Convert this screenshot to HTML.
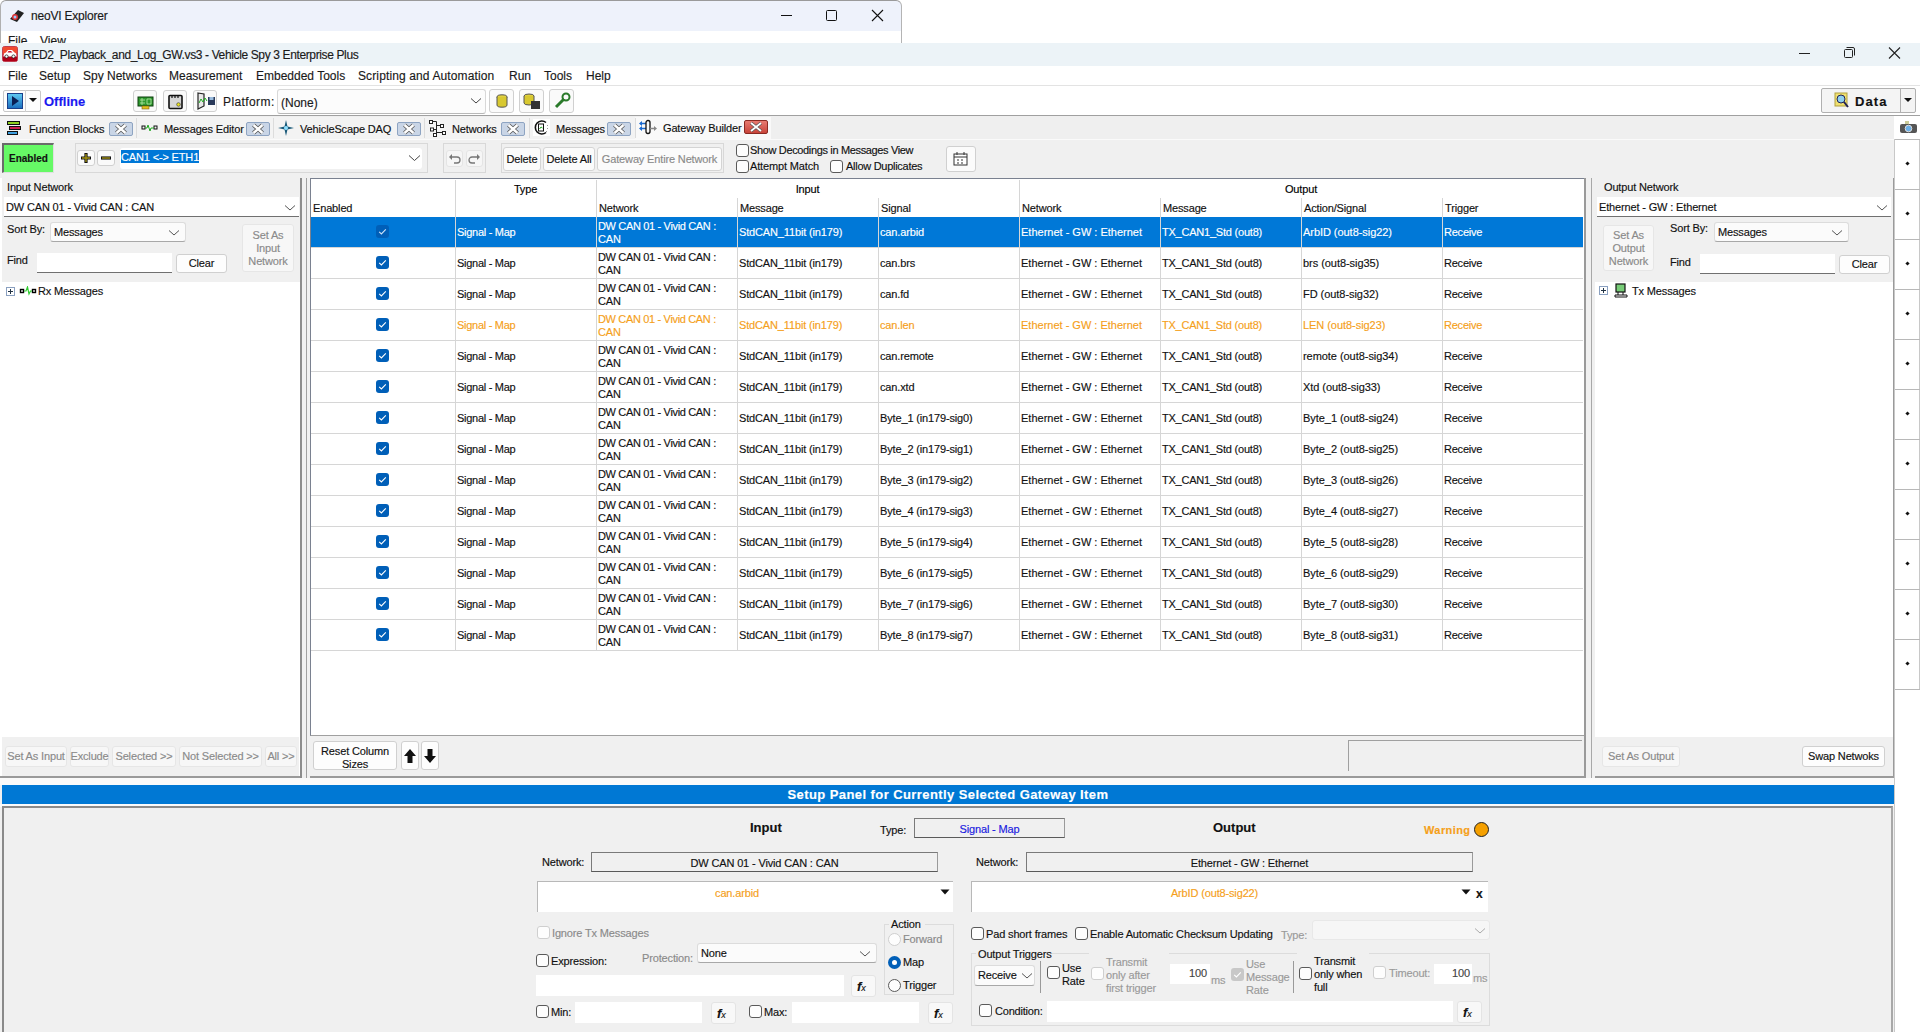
<!DOCTYPE html><html><head><meta charset="utf-8"><style>
*{margin:0;padding:0;box-sizing:border-box}
html,body{width:1920px;height:1032px;overflow:hidden;background:#fff;position:relative;font-family:"Liberation Sans",sans-serif}
body>div,body>svg{position:absolute}
.t{position:absolute;white-space:nowrap;line-height:normal;-webkit-text-stroke:0.15px currentColor}
</style></head><body><div style="left:0px;top:0px;width:902px;height:43px;background:#fff"></div>
<div style="left:0px;top:0px;width:902px;height:31px;background:#eef2fb;border-top:1px solid #9a9a9a;border-left:1px solid #b0b0b0;border-right:1px solid #b4b4b4;border-top-left-radius:6px;border-top-right-radius:6px"></div>
<div style="left:0px;top:31px;width:902px;height:12px;background:#fff;border-left:1px solid #b0b0b0;border-right:1px solid #b4b4b4"></div>
<div class="t" style="left:31px;top:9px;font-size:12px;color:#1a1a1a;font-weight:normal;letter-spacing:-0.2px">neoVI Explorer</div>
<div class="t" style="left:8px;top:34px;font-size:12px;color:#1a1a1a;font-weight:normal;">File</div>
<div class="t" style="left:40px;top:34px;font-size:12px;color:#1a1a1a;font-weight:normal;">View</div>
<div style="left:0px;top:43px;width:1920px;height:23px;background:#ecf3f7"></div>
<div class="t" style="left:23px;top:48px;font-size:12px;color:#1a1a1a;font-weight:normal;letter-spacing:-0.37px">RED2_Playback_and_Log_GW.vs3 - Vehicle Spy 3 Enterprise Plus</div>
<div style="left:0px;top:66px;width:1920px;height:19px;background:#fff"></div>
<div class="t" style="left:8px;top:69px;font-size:12px;color:#1a1a1a;font-weight:normal;">File</div>
<div class="t" style="left:39px;top:69px;font-size:12px;color:#1a1a1a;font-weight:normal;">Setup</div>
<div class="t" style="left:83px;top:69px;font-size:12px;color:#1a1a1a;font-weight:normal;">Spy Networks</div>
<div class="t" style="left:169px;top:69px;font-size:12px;color:#1a1a1a;font-weight:normal;">Measurement</div>
<div class="t" style="left:256px;top:69px;font-size:12px;color:#1a1a1a;font-weight:normal;">Embedded Tools</div>
<div class="t" style="left:358px;top:69px;font-size:12px;color:#1a1a1a;font-weight:normal;letter-spacing:0.12px">Scripting and Automation</div>
<div class="t" style="left:509px;top:69px;font-size:12px;color:#1a1a1a;font-weight:normal;">Run</div>
<div class="t" style="left:544px;top:69px;font-size:12px;color:#1a1a1a;font-weight:normal;">Tools</div>
<div class="t" style="left:586px;top:69px;font-size:12px;color:#1a1a1a;font-weight:normal;">Help</div>
<div style="left:0px;top:85px;width:1920px;height:1px;background:#e3e3e3"></div>
<div style="left:0px;top:86px;width:1920px;height:29px;background:#fff"></div>
<div style="left:0px;top:115px;width:1920px;height:1px;background:#a0a0a0"></div>
<div style="left:0px;top:116px;width:1895px;height:23px;background:#efefef"></div>
<div style="left:0px;top:117px;width:635px;height:22px;background:#f3f3f3"></div>
<div style="left:635px;top:117px;width:136px;height:22px;background:#f9f9f9"></div>
<div style="left:0px;top:139px;width:1895px;height:1px;background:#fafafa"></div>
<div style="left:0px;top:140px;width:1895px;height:37px;background:#f0f0f0"></div>
<svg style="left:1795px;top:47px" width="20" height="14"><line x1="4" y1="6.5" x2="15" y2="6.5" stroke="#222" stroke-width="1"/></svg>
<svg style="left:1840px;top:45px" width="20" height="16"><rect x="4.5" y="4.5" width="8" height="8" rx="1" fill="none" stroke="#222"/><path d="M6.5 2.5 H13 a1.5 1.5 0 0 1 1.5 1.5 V10.5" fill="none" stroke="#222"/></svg>
<svg style="left:1885px;top:45px" width="20" height="16"><path d="M4 2.5 L15 13.5 M15 2.5 L4 13.5" stroke="#222" stroke-width="1.1"/></svg>
<svg style="left:776px;top:7px" width="20" height="16"><line x1="5" y1="8.5" x2="16" y2="8.5" stroke="#111" stroke-width="1"/></svg>
<svg style="left:822px;top:6px" width="20" height="18"><rect x="4.5" y="4.5" width="10" height="10" rx="1" fill="none" stroke="#111"/></svg>
<svg style="left:868px;top:6px" width="20" height="18"><path d="M4 4 L15 15 M15 4 L4 15" stroke="#111" stroke-width="1.1"/></svg>
<svg style="left:8px;top:7px" width="18" height="17"><path d="M2 12 L10 3 L16 6 L9 15 Z" fill="#222"/><circle cx="7" cy="10" r="3" fill="#d33"/><circle cx="7" cy="10" r="1.5" fill="#9cf"/></svg>
<svg style="left:2px;top:46px" width="16" height="16"><rect x="0.5" y="0.5" width="15" height="15" rx="2" fill="#c8102e" stroke="#c04050"/><rect x="1" y="1" width="14" height="7" fill="#f04a30"/><rect x="1" y="11" width="14" height="4" fill="#b00018"/><path d="M1.5 9 Q2 6.5 4 6.5 L6 4 H10 L12.5 6.5 Q14.5 7 14.5 9 V10.5 H1.5 Z" fill="#fff"/><path d="M6.5 5 H9 L10.5 6.5 H5.5 Z" fill="#c8102e"/><circle cx="4.5" cy="10.5" r="1.6" fill="#fff" stroke="#222" stroke-width="0.8"/><circle cx="11.5" cy="10.5" r="1.6" fill="#fff" stroke="#222" stroke-width="0.8"/></svg>
<div style="left:3px;top:90px;width:38px;height:22px;border:1px solid #c8c8c8;border-radius:2px;background:#fdfdfd"></div>
<div style="left:25px;top:90px;width:1px;height:22px;background:#d0d0d0"></div>
<div style="left:7px;top:93px;width:16px;height:16px;background:linear-gradient(#5ec8f0,#1c6fc0);border:1px solid #1a3f8a"></div>
<svg style="left:7px;top:93px" width="16" height="16"><path d="M5 3 L12 8 L5 13 Z" fill="#0a1f55"/></svg>
<svg style="left:28px;top:97px" width="10" height="6"><path d="M1 1 H9 L5 5 Z" fill="#111"/></svg>
<div class="t" style="left:44px;top:94px;font-size:13px;color:#1a1af0;font-weight:bold;letter-spacing:0px">Offline</div>
<div style="left:133px;top:90px;width:24px;height:22px;border:1px solid #d0d0d0;border-radius:3px;background:#fafafa"></div>
<div style="left:163px;top:90px;width:24px;height:22px;border:1px solid #d0d0d0;border-radius:3px;background:#fafafa"></div>
<div style="left:193px;top:90px;width:24px;height:22px;border:1px solid #d0d0d0;border-radius:3px;background:#fafafa"></div>
<svg style="left:137px;top:96px" width="18" height="14"><rect x="1" y="1" width="15" height="9" fill="#2f9a2f" stroke="#0d3d0d"/><path d="M3 4 H8 M3 7 H8 M5 2 V9 M10 3 H14 V8 H10 Z" stroke="#b8e8a8" stroke-width="0.8" fill="none"/><rect x="5" y="10" width="7" height="3" fill="#e0c020" stroke="#806010" stroke-width="0.6"/></svg>
<svg style="left:168px;top:94px" width="16" height="16"><rect x="1" y="1.5" width="13" height="13" rx="1" fill="#d6d6d6" stroke="#111" stroke-width="1.6"/><path d="M4 1 V4 M7 1 V4 M10 1 V4" stroke="#111" stroke-width="1.2"/><circle cx="10.5" cy="10.5" r="1.8" fill="#e8e020" stroke="#333" stroke-width="0.6"/></svg>
<svg style="left:196px;top:92px" width="20" height="18"><path d="M2 1 L8 2 L8 14 L2 17 Z" fill="#e8e8e8" stroke="#222" stroke-width="1.2"/><path d="M3 11 L5 7 L7 10 L9 6 L11 9" stroke="#2a2" fill="none"/><rect x="12" y="5" width="7" height="8" fill="#2a3a5a"/><rect x="13.5" y="5" width="4" height="3" fill="#9bd"/></svg>
<div class="t" style="left:223px;top:95px;font-size:12px;color:#1a1a1a;font-weight:normal;letter-spacing:0.4px">Platform:</div>
<div style="left:277px;top:89px;width:209px;height:25px;border:1px solid #d8d8d8;border-bottom:1px solid #b8b8b8;border-radius:3px;background:#fcfcfc"></div>
<div class="t" style="left:281px;top:96px;font-size:12px;color:#1a1a1a;font-weight:normal;">(None)</div>
<svg style="left:470px;top:97px" width="12" height="8"><path d="M1 1.5 L6 6 L11 1.5" stroke="#444" fill="none"/></svg>
<div style="left:489px;top:89px;width:25px;height:24px;border:1px solid #d0d0d0;border-radius:3px;background:#fafafa"></div>
<div style="left:519px;top:89px;width:25px;height:24px;border:1px solid #d0d0d0;border-radius:3px;background:#fafafa"></div>
<div style="left:549px;top:89px;width:25px;height:24px;border:1px solid #d0d0d0;border-radius:3px;background:#fafafa"></div>
<svg style="left:493px;top:93px" width="18" height="16"><ellipse cx="9" cy="4" rx="5" ry="2.2" fill="#e0d040" stroke="#555"/><path d="M4 4 V12 A5 2.2 0 0 0 14 12 V4" fill="#d8c830" stroke="#555"/></svg>
<svg style="left:522px;top:92px" width="20" height="18"><ellipse cx="7" cy="4" rx="5" ry="2" fill="#e0d040" stroke="#555"/><path d="M2 4 V11 A5 2 0 0 0 12 11 V4" fill="#d8c830" stroke="#555"/><rect x="9" y="9" width="9" height="8" fill="#333"/></svg>
<svg style="left:553px;top:92px" width="18" height="18"><path d="M3 15 L11 7" stroke="#2a7a2a" stroke-width="3"/><circle cx="13" cy="5" r="3.5" fill="none" stroke="#2a7a2a" stroke-width="2"/></svg>
<div style="left:1821px;top:88px;width:95px;height:25px;border:1px solid #b0b0b0;border-radius:2px;background:#f4f4f4"></div>
<div style="left:1900px;top:89px;width:1px;height:23px;background:#b0b0b0"></div>
<svg style="left:1834px;top:92px" width="16" height="16"><rect x="1" y="1" width="12" height="13" fill="#f0e070" stroke="#b0a040"/><circle cx="7" cy="7" r="4" fill="#8fd0f0" stroke="#225"/><path d="M10 10 L14 15" stroke="#225" stroke-width="2"/></svg>
<div class="t" style="left:1855px;top:94px;font-size:13px;color:#111;font-weight:bold;letter-spacing:1.1px">Data</div>
<svg style="left:1903px;top:97px" width="10" height="6"><path d="M1 1 H9 L5 5 Z" fill="#111"/></svg>
<div class="t" style="left:29px;top:123px;font-size:11px;color:#111;font-weight:normal;letter-spacing:-0.15px;">Function Blocks</div>
<div style="left:109px;top:122px;width:24px;height:14px;background:#c9d5e6;border:1px solid #8ea4c2;border-radius:2px"></div>
<svg style="left:114px;top:123px" width="14" height="12"><path d="M2.5 2 L11.5 10 M11.5 2 L2.5 10" stroke="#5a5a5a" stroke-width="4.2"/><path d="M2.5 2 L11.5 10 M11.5 2 L2.5 10" stroke="#fff" stroke-width="2.4"/></svg>
<div style="left:136px;top:118px;width:1px;height:20px;background:#dcdcdc"></div>
<div class="t" style="left:164px;top:123px;font-size:11px;color:#111;font-weight:normal;letter-spacing:-0.15px;">Messages Editor</div>
<div style="left:246px;top:122px;width:24px;height:14px;background:#c9d5e6;border:1px solid #8ea4c2;border-radius:2px"></div>
<svg style="left:251px;top:123px" width="14" height="12"><path d="M2.5 2 L11.5 10 M11.5 2 L2.5 10" stroke="#5a5a5a" stroke-width="4.2"/><path d="M2.5 2 L11.5 10 M11.5 2 L2.5 10" stroke="#fff" stroke-width="2.4"/></svg>
<div style="left:273px;top:118px;width:1px;height:20px;background:#dcdcdc"></div>
<div class="t" style="left:300px;top:123px;font-size:11px;color:#111;font-weight:normal;letter-spacing:-0.15px;">VehicleScape DAQ</div>
<div style="left:397px;top:122px;width:24px;height:14px;background:#c9d5e6;border:1px solid #8ea4c2;border-radius:2px"></div>
<svg style="left:402px;top:123px" width="14" height="12"><path d="M2.5 2 L11.5 10 M11.5 2 L2.5 10" stroke="#5a5a5a" stroke-width="4.2"/><path d="M2.5 2 L11.5 10 M11.5 2 L2.5 10" stroke="#fff" stroke-width="2.4"/></svg>
<div style="left:424px;top:118px;width:1px;height:20px;background:#dcdcdc"></div>
<div class="t" style="left:452px;top:123px;font-size:11px;color:#111;font-weight:normal;letter-spacing:-0.15px;">Networks</div>
<div style="left:501px;top:122px;width:24px;height:14px;background:#c9d5e6;border:1px solid #8ea4c2;border-radius:2px"></div>
<svg style="left:506px;top:123px" width="14" height="12"><path d="M2.5 2 L11.5 10 M11.5 2 L2.5 10" stroke="#5a5a5a" stroke-width="4.2"/><path d="M2.5 2 L11.5 10 M11.5 2 L2.5 10" stroke="#fff" stroke-width="2.4"/></svg>
<div style="left:529px;top:118px;width:1px;height:20px;background:#dcdcdc"></div>
<div class="t" style="left:556px;top:123px;font-size:11px;color:#111;font-weight:normal;letter-spacing:-0.15px;">Messages</div>
<div style="left:607px;top:122px;width:24px;height:14px;background:#c9d5e6;border:1px solid #8ea4c2;border-radius:2px"></div>
<svg style="left:612px;top:123px" width="14" height="12"><path d="M2.5 2 L11.5 10 M11.5 2 L2.5 10" stroke="#5a5a5a" stroke-width="4.2"/><path d="M2.5 2 L11.5 10 M11.5 2 L2.5 10" stroke="#fff" stroke-width="2.4"/></svg>
<div style="left:635px;top:118px;width:1px;height:20px;background:#dcdcdc"></div>
<div class="t" style="left:663px;top:122px;font-size:11px;color:#111;font-weight:normal;letter-spacing:-0.15px;">Gateway Builder</div>
<div style="left:744px;top:120px;width:24px;height:14px;background:linear-gradient(#e87a70,#c8443a);border:1px solid #8a2a22;border-radius:2px"></div>
<svg style="left:749px;top:121px" width="14" height="12"><path d="M2 2 L12 10 M12 2 L2 10" stroke="#555" stroke-width="3.2"/><path d="M2 2 L12 10 M12 2 L2 10" stroke="#fff" stroke-width="1.8"/></svg>
<div style="left:7px;top:121px;width:13px;height:4px;background:#8fd020;border:1px solid #111"></div><div style="left:9px;top:126px;width:12px;height:4px;background:#d02050;border:1px solid #111"></div><div style="left:7px;top:131px;width:11px;height:4px;background:#40a0e0;border:1px solid #111"></div>
<svg style="left:141px;top:122px" width="17" height="12"><rect x="1" y="4" width="3" height="3" fill="none" stroke="#111"/><rect x="13" y="4" width="3" height="3" fill="none" stroke="#111"/><path d="M4 6 L6 6 L7 3 L9 9 L10 6 L13 6" stroke="#2a2" fill="none"/></svg>
<svg style="left:278px;top:120px" width="16" height="16"><path d="M8 0 L9.5 6.5 L16 8 L9.5 9.5 L8 16 L6.5 9.5 L0 8 L6.5 6.5 Z" fill="#1a5a7a"/><circle cx="8" cy="8" r="2" fill="#8fe0ff"/></svg>
<svg style="left:428px;top:119px" width="19" height="19"><path d="M4.5 2.5 H8.5 V14 M8.5 6.5 H12 M5.5 10.5 H8.5 M8.5 13.5 H14" stroke="#222" fill="none"/><rect x="1.5" y="1.5" width="3" height="3" fill="#fff" stroke="#222"/><rect x="12.5" y="5.5" width="3" height="3" fill="#fff" stroke="#222"/><rect x="2.5" y="9" width="3" height="3" fill="#fff" stroke="#222"/><rect x="14.5" y="12.5" width="3" height="3" fill="#fff" stroke="#222"/><rect x="5.5" y="14.5" width="3" height="3" fill="#fff" stroke="#222"/></svg>
<svg style="left:533px;top:119px" width="17" height="17"><rect x="0" y="0" width="17" height="17" fill="#fff"/><path d="M13 3.5 A6.5 6.5 0 1 0 13 13.5" fill="none" stroke="#111" stroke-width="1.6"/><rect x="5.5" y="5" width="5" height="7" fill="#fff" stroke="#111"/><path d="M6.5 10 L8 8 L9.5 9" stroke="#2a2" fill="none"/><path d="M14.5 6 V7 M14.5 9 V10 M13.5 12 V13" stroke="#999"/></svg>
<svg style="left:639px;top:119px" width="19" height="16"><path d="M1 4.5 H7 M1 9.5 H7" stroke="#1a6ad0" stroke-width="1.6"/><path d="M0 4.5 L3 2 V7 Z M0 9.5 L3 7 V12 Z" fill="#1a6ad0"/><rect x="7" y="1.5" width="4" height="13" rx="2" fill="none" stroke="#111" stroke-width="1.3"/><path d="M11 9.5 H16" stroke="#888" stroke-width="1.5"/><path d="M18 9.5 L15 7 V12 Z" fill="#888"/></svg>
<div style="left:1896px;top:120px;width:22px;height:18px"></div>
<div style="left:2px;top:143px;width:52px;height:30px;background:#66f966;border-top:2px solid #6a6a6a;border-left:2px solid #6a6a6a;border-right:1px solid #e0e0e0;border-bottom:1px solid #e0e0e0"></div>
<div class="t" style="left:9px;top:153px;font-size:10px;color:#111;font-weight:bold;">Enabled</div>
<div style="left:75px;top:143px;width:353px;height:30px;border:1px solid #d8d8d8;background:#f0f0f0"></div>
<div style="left:120px;top:148px;width:302px;height:21px;background:#fff;border-radius:3px"></div>
<div style="left:77px;top:150px;width:18px;height:16px;border:1px solid #d0d0d0;border-radius:3px;background:#fafafa"></div>
<div style="left:97px;top:150px;width:18px;height:16px;border:1px solid #d0d0d0;border-radius:3px;background:#fafafa"></div>
<svg style="left:80px;top:152px" width="12" height="12"><path d="M6 1 V11 M1 6 H11" stroke="#111" stroke-width="3.2"/><path d="M6 2 V10 M2 6 H10" stroke="#a09010" stroke-width="1.4"/></svg>
<svg style="left:100px;top:152px" width="12" height="12"><path d="M1 6 H11" stroke="#111" stroke-width="3.2"/><path d="M2 6 H10" stroke="#a09010" stroke-width="1.4"/></svg>
<div style="left:121px;top:150px;width:78px;height:13px;background:#0078d7"></div>
<div class="t" style="left:121px;top:151px;font-size:11px;color:#fff;font-weight:normal;letter-spacing:-0.15px;">CAN1 &lt;-&gt; ETH1</div>
<svg style="left:408px;top:154px" width="13" height="8"><path d="M1 1.5 L6.5 6.5 L12 1.5" stroke="#444" fill="none"/></svg>
<div style="left:443px;top:143px;width:43px;height:30px;border:1px solid #d8d8d8"></div>
<div style="left:446px;top:150px;width:17px;height:17px;border:1px solid #e4e4e4;border-radius:3px;background:#f6f6f6"></div>
<div style="left:466px;top:150px;width:17px;height:17px;border:1px solid #e4e4e4;border-radius:3px;background:#f6f6f6"></div>
<svg style="left:448px;top:153px" width="14" height="11"><path d="M3 4 H9 A3 3 0 0 1 9 10 H6" stroke="#777" fill="none" stroke-width="1.3"/><path d="M1 4 L4 1 V7 Z" fill="#777"/></svg>
<svg style="left:467px;top:153px" width="14" height="11"><path d="M11 4 H5 A3 3 0 0 0 5 10 H8" stroke="#777" fill="none" stroke-width="1.3"/><path d="M13 4 L10 1 V7 Z" fill="#777"/></svg>
<div style="left:501px;top:143px;width:223px;height:30px;border:1px solid #d8d8d8"></div>
<div style="left:503px;top:147px;width:38px;height:24px;border:1px solid #d4d4d4;border-radius:3px;background:#fbfbfb"></div>
<div class="t" style="left:503px;top:153px;width:38px;text-align:center;font-size:11px;color:#111;font-weight:normal;letter-spacing:-0.15px;">Delete</div>
<div style="left:543px;top:147px;width:52px;height:24px;border:1px solid #d4d4d4;border-radius:3px;background:#fbfbfb"></div>
<div class="t" style="left:543px;top:153px;width:52px;text-align:center;font-size:11px;color:#111;font-weight:normal;letter-spacing:-0.15px;">Delete All</div>
<div style="left:597px;top:147px;width:125px;height:24px;border:1px solid #d4d4d4;border-radius:3px;background:#fbfbfb"></div>
<div class="t" style="left:597px;top:153px;width:125px;text-align:center;font-size:11px;color:#8a8a8a;font-weight:normal;letter-spacing:-0.15px;">Gateway Entire Network</div>
<div style="left:736px;top:144px;width:13px;height:13px;border:1px solid #5a5a5a;border-radius:3px;background:#fdfdfd"></div>
<div class="t" style="left:750px;top:144px;font-size:11px;color:#111;font-weight:normal;letter-spacing:-0.15px;letter-spacing:-0.35px">Show Decodings in Messages View</div>
<div style="left:736px;top:160px;width:13px;height:13px;border:1px solid #5a5a5a;border-radius:3px;background:#fdfdfd"></div>
<div class="t" style="left:750px;top:160px;font-size:11px;color:#111;font-weight:normal;letter-spacing:-0.15px;">Attempt Match</div>
<div style="left:830px;top:160px;width:13px;height:13px;border:1px solid #5a5a5a;border-radius:3px;background:#fdfdfd"></div>
<div class="t" style="left:846px;top:160px;font-size:11px;color:#111;font-weight:normal;letter-spacing:-0.15px;letter-spacing:-0.28px">Allow Duplicates</div>
<div style="left:946px;top:146px;width:30px;height:26px;border:1px solid #d0d0d0;border-radius:3px;background:#fbfbfb"></div>
<svg style="left:953px;top:152px" width="15" height="14"><rect x="1" y="2" width="13" height="11" fill="#fff" stroke="#333"/><path d="M1 5 H14 M4 8 H6 M8 8 H10 M4 11 H6 M8 11 H10" stroke="#333"/><path d="M4 0 V3 M11 0 V3" stroke="#333"/></svg>
<div style="left:0px;top:177px;width:1895px;height:610px;background:#f0f0f0"></div>
<div style="left:0px;top:178px;width:300px;height:599px;background:#fff"></div>
<div style="left:2px;top:178px;width:298px;height:104px;background:#f0f0f0"></div>
<div class="t" style="left:7px;top:181px;font-size:11px;color:#111;font-weight:normal;letter-spacing:-0.15px;">Input Network</div>
<div style="left:4px;top:197px;width:295px;height:20px;background:#fff;border-bottom:1px solid #707070"></div>
<div class="t" style="left:6px;top:201px;font-size:11px;color:#111;font-weight:normal;letter-spacing:-0.15px;">DW CAN 01 - Vivid CAN : CAN</div>
<svg style="left:284px;top:204px" width="12" height="8"><path d="M1 1.5 L6 6 L11 1.5" stroke="#555" fill="none"/></svg>
<div class="t" style="left:7px;top:223px;font-size:11px;color:#111;font-weight:normal;letter-spacing:-0.15px;">Sort By:</div>
<div style="left:50px;top:222px;width:136px;height:20px;background:#fbfbfb;border:1px solid #dcdcdc;border-bottom-color:#a8a8a8;border-radius:3px"></div>
<div class="t" style="left:54px;top:226px;font-size:11px;color:#111;font-weight:normal;letter-spacing:-0.15px;">Messages</div>
<svg style="left:168px;top:229px" width="12" height="8"><path d="M1 1.5 L6 6 L11 1.5" stroke="#555" fill="none"/></svg>
<div style="left:242px;top:224px;width:52px;height:48px;border:1px solid #e6e6e6;border-radius:3px;background:#f7f7f7"></div>
<div class="t" style="left:242px;top:229px;width:52px;text-align:center;font-size:11px;color:#8a8a8a;font-weight:normal;letter-spacing:-0.15px;">Set As</div>
<div class="t" style="left:242px;top:242px;width:52px;text-align:center;font-size:11px;color:#8a8a8a;font-weight:normal;letter-spacing:-0.15px;">Input</div>
<div class="t" style="left:242px;top:255px;width:52px;text-align:center;font-size:11px;color:#8a8a8a;font-weight:normal;letter-spacing:-0.15px;">Network</div>
<div class="t" style="left:7px;top:254px;font-size:11px;color:#111;font-weight:normal;letter-spacing:-0.15px;">Find</div>
<div style="left:37px;top:253px;width:135px;height:20px;background:#fff;border-bottom:1px solid #707070"></div>
<div style="left:176px;top:254px;width:51px;height:19px;border:1px solid #d0d0d0;border-radius:3px;background:#fdfdfd"></div>
<div class="t" style="left:176px;top:257px;width:51px;text-align:center;font-size:11px;color:#111;font-weight:normal;letter-spacing:-0.15px;">Clear</div>
<div style="left:6px;top:287px;width:9px;height:9px;border:1px solid #8aa0c0;background:#fff"></div>
<svg style="left:6px;top:287px" width="9" height="9"><path d="M2 4.5 H7 M4.5 2 V7" stroke="#234"/></svg>
<svg style="left:19px;top:286px" width="18" height="10"><rect x="1.5" y="3.5" width="3" height="3" fill="#fff" stroke="#000" stroke-width="1.4"/><rect x="13.5" y="3.5" width="3" height="3" fill="#fff" stroke="#000" stroke-width="1.4"/><path d="M5 5 L7 5 L8.5 1 L10 8 L11.5 5 L13 5" stroke="#3c3" stroke-width="1.2" fill="none"/></svg>
<div class="t" style="left:38px;top:285px;font-size:11px;color:#111;font-weight:normal;letter-spacing:-0.15px;">Rx Messages</div>
<div style="left:2px;top:737px;width:297px;height:40px;background:#f0f0f0"></div>
<div style="left:5px;top:746px;width:62px;height:21px;border:1px solid #e6e6e6;border-radius:3px;background:#f7f7f7"></div>
<div class="t" style="left:5px;top:750px;width:62px;text-align:center;font-size:11px;color:#8a8a8a;font-weight:normal;letter-spacing:-0.15px;">Set As Input</div>
<div style="left:70px;top:746px;width:39px;height:21px;border:1px solid #e6e6e6;border-radius:3px;background:#f7f7f7"></div>
<div class="t" style="left:70px;top:750px;width:39px;text-align:center;font-size:11px;color:#8a8a8a;font-weight:normal;letter-spacing:-0.15px;">Exclude</div>
<div style="left:112px;top:746px;width:64px;height:21px;border:1px solid #e6e6e6;border-radius:3px;background:#f7f7f7"></div>
<div class="t" style="left:112px;top:750px;width:64px;text-align:center;font-size:11px;color:#8a8a8a;font-weight:normal;letter-spacing:-0.15px;">Selected &gt;&gt;</div>
<div style="left:179px;top:746px;width:83px;height:21px;border:1px solid #e6e6e6;border-radius:3px;background:#f7f7f7"></div>
<div class="t" style="left:179px;top:750px;width:83px;text-align:center;font-size:11px;color:#8a8a8a;font-weight:normal;letter-spacing:-0.15px;">Not Selected &gt;&gt;</div>
<div style="left:265px;top:746px;width:32px;height:21px;border:1px solid #e6e6e6;border-radius:3px;background:#f7f7f7"></div>
<div class="t" style="left:265px;top:750px;width:32px;text-align:center;font-size:11px;color:#8a8a8a;font-weight:normal;letter-spacing:-0.15px;">All &gt;&gt;</div>
<div style="left:0px;top:776px;width:300px;height:2px;background:#9a9a9a"></div>
<div style="left:300px;top:178px;width:2px;height:600px;background:#8c8c8c"></div>
<div style="left:306px;top:178px;width:1px;height:600px;background:#a0a0a0"></div>
<div style="left:310px;top:178px;width:1275px;height:558px;background:#fff;border-top:1px solid #7a8190;border-left:1px solid #7a8190;border-bottom:1px solid #a0a0a0"></div>
<div style="left:455px;top:180px;width:1px;height:37px;background:#d6d6d6"></div>
<div style="left:596px;top:180px;width:1px;height:37px;background:#d6d6d6"></div>
<div style="left:1019px;top:180px;width:1px;height:37px;background:#d6d6d6"></div>
<div style="left:737px;top:198px;width:1px;height:19px;background:#d6d6d6"></div>
<div style="left:878px;top:198px;width:1px;height:19px;background:#d6d6d6"></div>
<div style="left:1160px;top:198px;width:1px;height:19px;background:#d6d6d6"></div>
<div style="left:1301px;top:198px;width:1px;height:19px;background:#d6d6d6"></div>
<div style="left:1442px;top:198px;width:1px;height:19px;background:#d6d6d6"></div>
<div class="t" style="left:455px;top:183px;width:141px;text-align:center;font-size:11px;color:#000;font-weight:normal;letter-spacing:-0.15px;">Type</div>
<div class="t" style="left:596px;top:183px;width:423px;text-align:center;font-size:11px;color:#000;font-weight:normal;letter-spacing:-0.15px;">Input</div>
<div class="t" style="left:1019px;top:183px;width:564px;text-align:center;font-size:11px;color:#000;font-weight:normal;letter-spacing:-0.15px;">Output</div>
<div class="t" style="left:313px;top:202px;font-size:11px;color:#111;font-weight:normal;letter-spacing:-0.15px;">Enabled</div>
<div class="t" style="left:599px;top:202px;font-size:11px;color:#111;font-weight:normal;letter-spacing:-0.15px;">Network</div>
<div class="t" style="left:740px;top:202px;font-size:11px;color:#111;font-weight:normal;letter-spacing:-0.15px;">Message</div>
<div class="t" style="left:881px;top:202px;font-size:11px;color:#111;font-weight:normal;letter-spacing:-0.15px;">Signal</div>
<div class="t" style="left:1022px;top:202px;font-size:11px;color:#111;font-weight:normal;letter-spacing:-0.15px;">Network</div>
<div class="t" style="left:1163px;top:202px;font-size:11px;color:#111;font-weight:normal;letter-spacing:-0.15px;">Message</div>
<div class="t" style="left:1304px;top:202px;font-size:11px;color:#111;font-weight:normal;letter-spacing:-0.15px;">Action/Signal</div>
<div class="t" style="left:1445px;top:202px;font-size:11px;color:#111;font-weight:normal;letter-spacing:-0.15px;">Trigger</div>
<div style="left:311px;top:217px;width:1272px;height:30px;background:#0078d7"></div>
<div style="left:455px;top:217px;width:1px;height:31px;background:#d6d6d6"></div>
<div style="left:596px;top:217px;width:1px;height:31px;background:#d6d6d6"></div>
<div style="left:737px;top:217px;width:1px;height:31px;background:#d6d6d6"></div>
<div style="left:878px;top:217px;width:1px;height:31px;background:#d6d6d6"></div>
<div style="left:1019px;top:217px;width:1px;height:31px;background:#d6d6d6"></div>
<div style="left:1160px;top:217px;width:1px;height:31px;background:#d6d6d6"></div>
<div style="left:1301px;top:217px;width:1px;height:31px;background:#d6d6d6"></div>
<div style="left:1442px;top:217px;width:1px;height:31px;background:#d6d6d6"></div>
<div style="left:311px;top:247px;width:1272px;height:1px;background:#d6d6d6"></div>
<div style="left:376px;top:225px;width:13px;height:13px;background:#005fb8;border-radius:3px"></div>
<svg style="left:376px;top:225px" width="13" height="13"><path d="M3.2 6.8 L5.4 9 L9.8 4.3" stroke="#cfe3f7" fill="none" stroke-width="1.1"/></svg>
<div class="t" style="left:457px;top:226px;font-size:11px;color:#fff;font-weight:normal;letter-spacing:-0.15px;letter-spacing:-0.28px">Signal - Map</div>
<div class="t" style="left:598px;top:220px;font-size:11px;color:#fff;font-weight:normal;letter-spacing:-0.15px;letter-spacing:-0.34px">DW CAN 01 - Vivid CAN :</div>
<div class="t" style="left:598px;top:233px;font-size:11px;color:#fff;font-weight:normal;letter-spacing:-0.15px;">CAN</div>
<div class="t" style="left:739px;top:226px;font-size:11px;color:#fff;font-weight:normal;letter-spacing:-0.15px;">StdCAN_11bit (in179)</div>
<div class="t" style="left:880px;top:226px;font-size:11px;color:#fff;font-weight:normal;letter-spacing:-0.15px;">can.arbid</div>
<div class="t" style="left:1021px;top:226px;font-size:11px;color:#fff;font-weight:normal;letter-spacing:-0.15px;letter-spacing:0px">Ethernet - GW : Ethernet</div>
<div class="t" style="left:1162px;top:226px;font-size:11px;color:#fff;font-weight:normal;letter-spacing:-0.15px;letter-spacing:-0.22px">TX_CAN1_Std (out8)</div>
<div class="t" style="left:1303px;top:226px;font-size:11px;color:#fff;font-weight:normal;letter-spacing:-0.15px;letter-spacing:-0.05px">ArbID (out8-sig22)</div>
<div class="t" style="left:1444px;top:226px;font-size:11px;color:#fff;font-weight:normal;letter-spacing:-0.15px;letter-spacing:-0.22px">Receive</div>
<div style="left:455px;top:248px;width:1px;height:31px;background:#d6d6d6"></div>
<div style="left:596px;top:248px;width:1px;height:31px;background:#d6d6d6"></div>
<div style="left:737px;top:248px;width:1px;height:31px;background:#d6d6d6"></div>
<div style="left:878px;top:248px;width:1px;height:31px;background:#d6d6d6"></div>
<div style="left:1019px;top:248px;width:1px;height:31px;background:#d6d6d6"></div>
<div style="left:1160px;top:248px;width:1px;height:31px;background:#d6d6d6"></div>
<div style="left:1301px;top:248px;width:1px;height:31px;background:#d6d6d6"></div>
<div style="left:1442px;top:248px;width:1px;height:31px;background:#d6d6d6"></div>
<div style="left:311px;top:278px;width:1272px;height:1px;background:#d6d6d6"></div>
<div style="left:376px;top:256px;width:13px;height:13px;background:#005fb8;border-radius:3px"></div>
<svg style="left:376px;top:256px" width="13" height="13"><path d="M3.2 6.8 L5.4 9 L9.8 4.3" stroke="#fff" fill="none" stroke-width="1.1"/></svg>
<div class="t" style="left:457px;top:257px;font-size:11px;color:#111;font-weight:normal;letter-spacing:-0.15px;letter-spacing:-0.28px">Signal - Map</div>
<div class="t" style="left:598px;top:251px;font-size:11px;color:#111;font-weight:normal;letter-spacing:-0.15px;letter-spacing:-0.34px">DW CAN 01 - Vivid CAN :</div>
<div class="t" style="left:598px;top:264px;font-size:11px;color:#111;font-weight:normal;letter-spacing:-0.15px;">CAN</div>
<div class="t" style="left:739px;top:257px;font-size:11px;color:#111;font-weight:normal;letter-spacing:-0.15px;">StdCAN_11bit (in179)</div>
<div class="t" style="left:880px;top:257px;font-size:11px;color:#111;font-weight:normal;letter-spacing:-0.15px;">can.brs</div>
<div class="t" style="left:1021px;top:257px;font-size:11px;color:#111;font-weight:normal;letter-spacing:-0.15px;letter-spacing:0px">Ethernet - GW : Ethernet</div>
<div class="t" style="left:1162px;top:257px;font-size:11px;color:#111;font-weight:normal;letter-spacing:-0.15px;letter-spacing:-0.22px">TX_CAN1_Std (out8)</div>
<div class="t" style="left:1303px;top:257px;font-size:11px;color:#111;font-weight:normal;letter-spacing:-0.15px;letter-spacing:-0.05px">brs (out8-sig35)</div>
<div class="t" style="left:1444px;top:257px;font-size:11px;color:#111;font-weight:normal;letter-spacing:-0.15px;letter-spacing:-0.22px">Receive</div>
<div style="left:455px;top:279px;width:1px;height:31px;background:#d6d6d6"></div>
<div style="left:596px;top:279px;width:1px;height:31px;background:#d6d6d6"></div>
<div style="left:737px;top:279px;width:1px;height:31px;background:#d6d6d6"></div>
<div style="left:878px;top:279px;width:1px;height:31px;background:#d6d6d6"></div>
<div style="left:1019px;top:279px;width:1px;height:31px;background:#d6d6d6"></div>
<div style="left:1160px;top:279px;width:1px;height:31px;background:#d6d6d6"></div>
<div style="left:1301px;top:279px;width:1px;height:31px;background:#d6d6d6"></div>
<div style="left:1442px;top:279px;width:1px;height:31px;background:#d6d6d6"></div>
<div style="left:311px;top:309px;width:1272px;height:1px;background:#d6d6d6"></div>
<div style="left:376px;top:287px;width:13px;height:13px;background:#005fb8;border-radius:3px"></div>
<svg style="left:376px;top:287px" width="13" height="13"><path d="M3.2 6.8 L5.4 9 L9.8 4.3" stroke="#fff" fill="none" stroke-width="1.1"/></svg>
<div class="t" style="left:457px;top:288px;font-size:11px;color:#111;font-weight:normal;letter-spacing:-0.15px;letter-spacing:-0.28px">Signal - Map</div>
<div class="t" style="left:598px;top:282px;font-size:11px;color:#111;font-weight:normal;letter-spacing:-0.15px;letter-spacing:-0.34px">DW CAN 01 - Vivid CAN :</div>
<div class="t" style="left:598px;top:295px;font-size:11px;color:#111;font-weight:normal;letter-spacing:-0.15px;">CAN</div>
<div class="t" style="left:739px;top:288px;font-size:11px;color:#111;font-weight:normal;letter-spacing:-0.15px;">StdCAN_11bit (in179)</div>
<div class="t" style="left:880px;top:288px;font-size:11px;color:#111;font-weight:normal;letter-spacing:-0.15px;">can.fd</div>
<div class="t" style="left:1021px;top:288px;font-size:11px;color:#111;font-weight:normal;letter-spacing:-0.15px;letter-spacing:0px">Ethernet - GW : Ethernet</div>
<div class="t" style="left:1162px;top:288px;font-size:11px;color:#111;font-weight:normal;letter-spacing:-0.15px;letter-spacing:-0.22px">TX_CAN1_Std (out8)</div>
<div class="t" style="left:1303px;top:288px;font-size:11px;color:#111;font-weight:normal;letter-spacing:-0.15px;letter-spacing:-0.05px">FD (out8-sig32)</div>
<div class="t" style="left:1444px;top:288px;font-size:11px;color:#111;font-weight:normal;letter-spacing:-0.15px;letter-spacing:-0.22px">Receive</div>
<div style="left:455px;top:310px;width:1px;height:31px;background:#d6d6d6"></div>
<div style="left:596px;top:310px;width:1px;height:31px;background:#d6d6d6"></div>
<div style="left:737px;top:310px;width:1px;height:31px;background:#d6d6d6"></div>
<div style="left:878px;top:310px;width:1px;height:31px;background:#d6d6d6"></div>
<div style="left:1019px;top:310px;width:1px;height:31px;background:#d6d6d6"></div>
<div style="left:1160px;top:310px;width:1px;height:31px;background:#d6d6d6"></div>
<div style="left:1301px;top:310px;width:1px;height:31px;background:#d6d6d6"></div>
<div style="left:1442px;top:310px;width:1px;height:31px;background:#d6d6d6"></div>
<div style="left:311px;top:340px;width:1272px;height:1px;background:#d6d6d6"></div>
<div style="left:376px;top:318px;width:13px;height:13px;background:#005fb8;border-radius:3px"></div>
<svg style="left:376px;top:318px" width="13" height="13"><path d="M3.2 6.8 L5.4 9 L9.8 4.3" stroke="#fff" fill="none" stroke-width="1.1"/></svg>
<div class="t" style="left:457px;top:319px;font-size:11px;color:#f5a01a;font-weight:normal;letter-spacing:-0.15px;letter-spacing:-0.28px">Signal - Map</div>
<div class="t" style="left:598px;top:313px;font-size:11px;color:#f5a01a;font-weight:normal;letter-spacing:-0.15px;letter-spacing:-0.34px">DW CAN 01 - Vivid CAN :</div>
<div class="t" style="left:598px;top:326px;font-size:11px;color:#f5a01a;font-weight:normal;letter-spacing:-0.15px;">CAN</div>
<div class="t" style="left:739px;top:319px;font-size:11px;color:#f5a01a;font-weight:normal;letter-spacing:-0.15px;">StdCAN_11bit (in179)</div>
<div class="t" style="left:880px;top:319px;font-size:11px;color:#f5a01a;font-weight:normal;letter-spacing:-0.15px;">can.len</div>
<div class="t" style="left:1021px;top:319px;font-size:11px;color:#f5a01a;font-weight:normal;letter-spacing:-0.15px;letter-spacing:0px">Ethernet - GW : Ethernet</div>
<div class="t" style="left:1162px;top:319px;font-size:11px;color:#f5a01a;font-weight:normal;letter-spacing:-0.15px;letter-spacing:-0.22px">TX_CAN1_Std (out8)</div>
<div class="t" style="left:1303px;top:319px;font-size:11px;color:#f5a01a;font-weight:normal;letter-spacing:-0.15px;letter-spacing:-0.05px">LEN (out8-sig23)</div>
<div class="t" style="left:1444px;top:319px;font-size:11px;color:#f5a01a;font-weight:normal;letter-spacing:-0.15px;letter-spacing:-0.22px">Receive</div>
<div style="left:455px;top:341px;width:1px;height:31px;background:#d6d6d6"></div>
<div style="left:596px;top:341px;width:1px;height:31px;background:#d6d6d6"></div>
<div style="left:737px;top:341px;width:1px;height:31px;background:#d6d6d6"></div>
<div style="left:878px;top:341px;width:1px;height:31px;background:#d6d6d6"></div>
<div style="left:1019px;top:341px;width:1px;height:31px;background:#d6d6d6"></div>
<div style="left:1160px;top:341px;width:1px;height:31px;background:#d6d6d6"></div>
<div style="left:1301px;top:341px;width:1px;height:31px;background:#d6d6d6"></div>
<div style="left:1442px;top:341px;width:1px;height:31px;background:#d6d6d6"></div>
<div style="left:311px;top:371px;width:1272px;height:1px;background:#d6d6d6"></div>
<div style="left:376px;top:349px;width:13px;height:13px;background:#005fb8;border-radius:3px"></div>
<svg style="left:376px;top:349px" width="13" height="13"><path d="M3.2 6.8 L5.4 9 L9.8 4.3" stroke="#fff" fill="none" stroke-width="1.1"/></svg>
<div class="t" style="left:457px;top:350px;font-size:11px;color:#111;font-weight:normal;letter-spacing:-0.15px;letter-spacing:-0.28px">Signal - Map</div>
<div class="t" style="left:598px;top:344px;font-size:11px;color:#111;font-weight:normal;letter-spacing:-0.15px;letter-spacing:-0.34px">DW CAN 01 - Vivid CAN :</div>
<div class="t" style="left:598px;top:357px;font-size:11px;color:#111;font-weight:normal;letter-spacing:-0.15px;">CAN</div>
<div class="t" style="left:739px;top:350px;font-size:11px;color:#111;font-weight:normal;letter-spacing:-0.15px;">StdCAN_11bit (in179)</div>
<div class="t" style="left:880px;top:350px;font-size:11px;color:#111;font-weight:normal;letter-spacing:-0.15px;">can.remote</div>
<div class="t" style="left:1021px;top:350px;font-size:11px;color:#111;font-weight:normal;letter-spacing:-0.15px;letter-spacing:0px">Ethernet - GW : Ethernet</div>
<div class="t" style="left:1162px;top:350px;font-size:11px;color:#111;font-weight:normal;letter-spacing:-0.15px;letter-spacing:-0.22px">TX_CAN1_Std (out8)</div>
<div class="t" style="left:1303px;top:350px;font-size:11px;color:#111;font-weight:normal;letter-spacing:-0.15px;letter-spacing:-0.05px">remote (out8-sig34)</div>
<div class="t" style="left:1444px;top:350px;font-size:11px;color:#111;font-weight:normal;letter-spacing:-0.15px;letter-spacing:-0.22px">Receive</div>
<div style="left:455px;top:372px;width:1px;height:31px;background:#d6d6d6"></div>
<div style="left:596px;top:372px;width:1px;height:31px;background:#d6d6d6"></div>
<div style="left:737px;top:372px;width:1px;height:31px;background:#d6d6d6"></div>
<div style="left:878px;top:372px;width:1px;height:31px;background:#d6d6d6"></div>
<div style="left:1019px;top:372px;width:1px;height:31px;background:#d6d6d6"></div>
<div style="left:1160px;top:372px;width:1px;height:31px;background:#d6d6d6"></div>
<div style="left:1301px;top:372px;width:1px;height:31px;background:#d6d6d6"></div>
<div style="left:1442px;top:372px;width:1px;height:31px;background:#d6d6d6"></div>
<div style="left:311px;top:402px;width:1272px;height:1px;background:#d6d6d6"></div>
<div style="left:376px;top:380px;width:13px;height:13px;background:#005fb8;border-radius:3px"></div>
<svg style="left:376px;top:380px" width="13" height="13"><path d="M3.2 6.8 L5.4 9 L9.8 4.3" stroke="#fff" fill="none" stroke-width="1.1"/></svg>
<div class="t" style="left:457px;top:381px;font-size:11px;color:#111;font-weight:normal;letter-spacing:-0.15px;letter-spacing:-0.28px">Signal - Map</div>
<div class="t" style="left:598px;top:375px;font-size:11px;color:#111;font-weight:normal;letter-spacing:-0.15px;letter-spacing:-0.34px">DW CAN 01 - Vivid CAN :</div>
<div class="t" style="left:598px;top:388px;font-size:11px;color:#111;font-weight:normal;letter-spacing:-0.15px;">CAN</div>
<div class="t" style="left:739px;top:381px;font-size:11px;color:#111;font-weight:normal;letter-spacing:-0.15px;">StdCAN_11bit (in179)</div>
<div class="t" style="left:880px;top:381px;font-size:11px;color:#111;font-weight:normal;letter-spacing:-0.15px;">can.xtd</div>
<div class="t" style="left:1021px;top:381px;font-size:11px;color:#111;font-weight:normal;letter-spacing:-0.15px;letter-spacing:0px">Ethernet - GW : Ethernet</div>
<div class="t" style="left:1162px;top:381px;font-size:11px;color:#111;font-weight:normal;letter-spacing:-0.15px;letter-spacing:-0.22px">TX_CAN1_Std (out8)</div>
<div class="t" style="left:1303px;top:381px;font-size:11px;color:#111;font-weight:normal;letter-spacing:-0.15px;letter-spacing:-0.05px">Xtd (out8-sig33)</div>
<div class="t" style="left:1444px;top:381px;font-size:11px;color:#111;font-weight:normal;letter-spacing:-0.15px;letter-spacing:-0.22px">Receive</div>
<div style="left:455px;top:403px;width:1px;height:31px;background:#d6d6d6"></div>
<div style="left:596px;top:403px;width:1px;height:31px;background:#d6d6d6"></div>
<div style="left:737px;top:403px;width:1px;height:31px;background:#d6d6d6"></div>
<div style="left:878px;top:403px;width:1px;height:31px;background:#d6d6d6"></div>
<div style="left:1019px;top:403px;width:1px;height:31px;background:#d6d6d6"></div>
<div style="left:1160px;top:403px;width:1px;height:31px;background:#d6d6d6"></div>
<div style="left:1301px;top:403px;width:1px;height:31px;background:#d6d6d6"></div>
<div style="left:1442px;top:403px;width:1px;height:31px;background:#d6d6d6"></div>
<div style="left:311px;top:433px;width:1272px;height:1px;background:#d6d6d6"></div>
<div style="left:376px;top:411px;width:13px;height:13px;background:#005fb8;border-radius:3px"></div>
<svg style="left:376px;top:411px" width="13" height="13"><path d="M3.2 6.8 L5.4 9 L9.8 4.3" stroke="#fff" fill="none" stroke-width="1.1"/></svg>
<div class="t" style="left:457px;top:412px;font-size:11px;color:#111;font-weight:normal;letter-spacing:-0.15px;letter-spacing:-0.28px">Signal - Map</div>
<div class="t" style="left:598px;top:406px;font-size:11px;color:#111;font-weight:normal;letter-spacing:-0.15px;letter-spacing:-0.34px">DW CAN 01 - Vivid CAN :</div>
<div class="t" style="left:598px;top:419px;font-size:11px;color:#111;font-weight:normal;letter-spacing:-0.15px;">CAN</div>
<div class="t" style="left:739px;top:412px;font-size:11px;color:#111;font-weight:normal;letter-spacing:-0.15px;">StdCAN_11bit (in179)</div>
<div class="t" style="left:880px;top:412px;font-size:11px;color:#111;font-weight:normal;letter-spacing:-0.15px;">Byte_1 (in179-sig0)</div>
<div class="t" style="left:1021px;top:412px;font-size:11px;color:#111;font-weight:normal;letter-spacing:-0.15px;letter-spacing:0px">Ethernet - GW : Ethernet</div>
<div class="t" style="left:1162px;top:412px;font-size:11px;color:#111;font-weight:normal;letter-spacing:-0.15px;letter-spacing:-0.22px">TX_CAN1_Std (out8)</div>
<div class="t" style="left:1303px;top:412px;font-size:11px;color:#111;font-weight:normal;letter-spacing:-0.15px;letter-spacing:-0.05px">Byte_1 (out8-sig24)</div>
<div class="t" style="left:1444px;top:412px;font-size:11px;color:#111;font-weight:normal;letter-spacing:-0.15px;letter-spacing:-0.22px">Receive</div>
<div style="left:455px;top:434px;width:1px;height:31px;background:#d6d6d6"></div>
<div style="left:596px;top:434px;width:1px;height:31px;background:#d6d6d6"></div>
<div style="left:737px;top:434px;width:1px;height:31px;background:#d6d6d6"></div>
<div style="left:878px;top:434px;width:1px;height:31px;background:#d6d6d6"></div>
<div style="left:1019px;top:434px;width:1px;height:31px;background:#d6d6d6"></div>
<div style="left:1160px;top:434px;width:1px;height:31px;background:#d6d6d6"></div>
<div style="left:1301px;top:434px;width:1px;height:31px;background:#d6d6d6"></div>
<div style="left:1442px;top:434px;width:1px;height:31px;background:#d6d6d6"></div>
<div style="left:311px;top:464px;width:1272px;height:1px;background:#d6d6d6"></div>
<div style="left:376px;top:442px;width:13px;height:13px;background:#005fb8;border-radius:3px"></div>
<svg style="left:376px;top:442px" width="13" height="13"><path d="M3.2 6.8 L5.4 9 L9.8 4.3" stroke="#fff" fill="none" stroke-width="1.1"/></svg>
<div class="t" style="left:457px;top:443px;font-size:11px;color:#111;font-weight:normal;letter-spacing:-0.15px;letter-spacing:-0.28px">Signal - Map</div>
<div class="t" style="left:598px;top:437px;font-size:11px;color:#111;font-weight:normal;letter-spacing:-0.15px;letter-spacing:-0.34px">DW CAN 01 - Vivid CAN :</div>
<div class="t" style="left:598px;top:450px;font-size:11px;color:#111;font-weight:normal;letter-spacing:-0.15px;">CAN</div>
<div class="t" style="left:739px;top:443px;font-size:11px;color:#111;font-weight:normal;letter-spacing:-0.15px;">StdCAN_11bit (in179)</div>
<div class="t" style="left:880px;top:443px;font-size:11px;color:#111;font-weight:normal;letter-spacing:-0.15px;">Byte_2 (in179-sig1)</div>
<div class="t" style="left:1021px;top:443px;font-size:11px;color:#111;font-weight:normal;letter-spacing:-0.15px;letter-spacing:0px">Ethernet - GW : Ethernet</div>
<div class="t" style="left:1162px;top:443px;font-size:11px;color:#111;font-weight:normal;letter-spacing:-0.15px;letter-spacing:-0.22px">TX_CAN1_Std (out8)</div>
<div class="t" style="left:1303px;top:443px;font-size:11px;color:#111;font-weight:normal;letter-spacing:-0.15px;letter-spacing:-0.05px">Byte_2 (out8-sig25)</div>
<div class="t" style="left:1444px;top:443px;font-size:11px;color:#111;font-weight:normal;letter-spacing:-0.15px;letter-spacing:-0.22px">Receive</div>
<div style="left:455px;top:465px;width:1px;height:31px;background:#d6d6d6"></div>
<div style="left:596px;top:465px;width:1px;height:31px;background:#d6d6d6"></div>
<div style="left:737px;top:465px;width:1px;height:31px;background:#d6d6d6"></div>
<div style="left:878px;top:465px;width:1px;height:31px;background:#d6d6d6"></div>
<div style="left:1019px;top:465px;width:1px;height:31px;background:#d6d6d6"></div>
<div style="left:1160px;top:465px;width:1px;height:31px;background:#d6d6d6"></div>
<div style="left:1301px;top:465px;width:1px;height:31px;background:#d6d6d6"></div>
<div style="left:1442px;top:465px;width:1px;height:31px;background:#d6d6d6"></div>
<div style="left:311px;top:495px;width:1272px;height:1px;background:#d6d6d6"></div>
<div style="left:376px;top:473px;width:13px;height:13px;background:#005fb8;border-radius:3px"></div>
<svg style="left:376px;top:473px" width="13" height="13"><path d="M3.2 6.8 L5.4 9 L9.8 4.3" stroke="#fff" fill="none" stroke-width="1.1"/></svg>
<div class="t" style="left:457px;top:474px;font-size:11px;color:#111;font-weight:normal;letter-spacing:-0.15px;letter-spacing:-0.28px">Signal - Map</div>
<div class="t" style="left:598px;top:468px;font-size:11px;color:#111;font-weight:normal;letter-spacing:-0.15px;letter-spacing:-0.34px">DW CAN 01 - Vivid CAN :</div>
<div class="t" style="left:598px;top:481px;font-size:11px;color:#111;font-weight:normal;letter-spacing:-0.15px;">CAN</div>
<div class="t" style="left:739px;top:474px;font-size:11px;color:#111;font-weight:normal;letter-spacing:-0.15px;">StdCAN_11bit (in179)</div>
<div class="t" style="left:880px;top:474px;font-size:11px;color:#111;font-weight:normal;letter-spacing:-0.15px;">Byte_3 (in179-sig2)</div>
<div class="t" style="left:1021px;top:474px;font-size:11px;color:#111;font-weight:normal;letter-spacing:-0.15px;letter-spacing:0px">Ethernet - GW : Ethernet</div>
<div class="t" style="left:1162px;top:474px;font-size:11px;color:#111;font-weight:normal;letter-spacing:-0.15px;letter-spacing:-0.22px">TX_CAN1_Std (out8)</div>
<div class="t" style="left:1303px;top:474px;font-size:11px;color:#111;font-weight:normal;letter-spacing:-0.15px;letter-spacing:-0.05px">Byte_3 (out8-sig26)</div>
<div class="t" style="left:1444px;top:474px;font-size:11px;color:#111;font-weight:normal;letter-spacing:-0.15px;letter-spacing:-0.22px">Receive</div>
<div style="left:455px;top:496px;width:1px;height:31px;background:#d6d6d6"></div>
<div style="left:596px;top:496px;width:1px;height:31px;background:#d6d6d6"></div>
<div style="left:737px;top:496px;width:1px;height:31px;background:#d6d6d6"></div>
<div style="left:878px;top:496px;width:1px;height:31px;background:#d6d6d6"></div>
<div style="left:1019px;top:496px;width:1px;height:31px;background:#d6d6d6"></div>
<div style="left:1160px;top:496px;width:1px;height:31px;background:#d6d6d6"></div>
<div style="left:1301px;top:496px;width:1px;height:31px;background:#d6d6d6"></div>
<div style="left:1442px;top:496px;width:1px;height:31px;background:#d6d6d6"></div>
<div style="left:311px;top:526px;width:1272px;height:1px;background:#d6d6d6"></div>
<div style="left:376px;top:504px;width:13px;height:13px;background:#005fb8;border-radius:3px"></div>
<svg style="left:376px;top:504px" width="13" height="13"><path d="M3.2 6.8 L5.4 9 L9.8 4.3" stroke="#fff" fill="none" stroke-width="1.1"/></svg>
<div class="t" style="left:457px;top:505px;font-size:11px;color:#111;font-weight:normal;letter-spacing:-0.15px;letter-spacing:-0.28px">Signal - Map</div>
<div class="t" style="left:598px;top:499px;font-size:11px;color:#111;font-weight:normal;letter-spacing:-0.15px;letter-spacing:-0.34px">DW CAN 01 - Vivid CAN :</div>
<div class="t" style="left:598px;top:512px;font-size:11px;color:#111;font-weight:normal;letter-spacing:-0.15px;">CAN</div>
<div class="t" style="left:739px;top:505px;font-size:11px;color:#111;font-weight:normal;letter-spacing:-0.15px;">StdCAN_11bit (in179)</div>
<div class="t" style="left:880px;top:505px;font-size:11px;color:#111;font-weight:normal;letter-spacing:-0.15px;">Byte_4 (in179-sig3)</div>
<div class="t" style="left:1021px;top:505px;font-size:11px;color:#111;font-weight:normal;letter-spacing:-0.15px;letter-spacing:0px">Ethernet - GW : Ethernet</div>
<div class="t" style="left:1162px;top:505px;font-size:11px;color:#111;font-weight:normal;letter-spacing:-0.15px;letter-spacing:-0.22px">TX_CAN1_Std (out8)</div>
<div class="t" style="left:1303px;top:505px;font-size:11px;color:#111;font-weight:normal;letter-spacing:-0.15px;letter-spacing:-0.05px">Byte_4 (out8-sig27)</div>
<div class="t" style="left:1444px;top:505px;font-size:11px;color:#111;font-weight:normal;letter-spacing:-0.15px;letter-spacing:-0.22px">Receive</div>
<div style="left:455px;top:527px;width:1px;height:31px;background:#d6d6d6"></div>
<div style="left:596px;top:527px;width:1px;height:31px;background:#d6d6d6"></div>
<div style="left:737px;top:527px;width:1px;height:31px;background:#d6d6d6"></div>
<div style="left:878px;top:527px;width:1px;height:31px;background:#d6d6d6"></div>
<div style="left:1019px;top:527px;width:1px;height:31px;background:#d6d6d6"></div>
<div style="left:1160px;top:527px;width:1px;height:31px;background:#d6d6d6"></div>
<div style="left:1301px;top:527px;width:1px;height:31px;background:#d6d6d6"></div>
<div style="left:1442px;top:527px;width:1px;height:31px;background:#d6d6d6"></div>
<div style="left:311px;top:557px;width:1272px;height:1px;background:#d6d6d6"></div>
<div style="left:376px;top:535px;width:13px;height:13px;background:#005fb8;border-radius:3px"></div>
<svg style="left:376px;top:535px" width="13" height="13"><path d="M3.2 6.8 L5.4 9 L9.8 4.3" stroke="#fff" fill="none" stroke-width="1.1"/></svg>
<div class="t" style="left:457px;top:536px;font-size:11px;color:#111;font-weight:normal;letter-spacing:-0.15px;letter-spacing:-0.28px">Signal - Map</div>
<div class="t" style="left:598px;top:530px;font-size:11px;color:#111;font-weight:normal;letter-spacing:-0.15px;letter-spacing:-0.34px">DW CAN 01 - Vivid CAN :</div>
<div class="t" style="left:598px;top:543px;font-size:11px;color:#111;font-weight:normal;letter-spacing:-0.15px;">CAN</div>
<div class="t" style="left:739px;top:536px;font-size:11px;color:#111;font-weight:normal;letter-spacing:-0.15px;">StdCAN_11bit (in179)</div>
<div class="t" style="left:880px;top:536px;font-size:11px;color:#111;font-weight:normal;letter-spacing:-0.15px;">Byte_5 (in179-sig4)</div>
<div class="t" style="left:1021px;top:536px;font-size:11px;color:#111;font-weight:normal;letter-spacing:-0.15px;letter-spacing:0px">Ethernet - GW : Ethernet</div>
<div class="t" style="left:1162px;top:536px;font-size:11px;color:#111;font-weight:normal;letter-spacing:-0.15px;letter-spacing:-0.22px">TX_CAN1_Std (out8)</div>
<div class="t" style="left:1303px;top:536px;font-size:11px;color:#111;font-weight:normal;letter-spacing:-0.15px;letter-spacing:-0.05px">Byte_5 (out8-sig28)</div>
<div class="t" style="left:1444px;top:536px;font-size:11px;color:#111;font-weight:normal;letter-spacing:-0.15px;letter-spacing:-0.22px">Receive</div>
<div style="left:455px;top:558px;width:1px;height:31px;background:#d6d6d6"></div>
<div style="left:596px;top:558px;width:1px;height:31px;background:#d6d6d6"></div>
<div style="left:737px;top:558px;width:1px;height:31px;background:#d6d6d6"></div>
<div style="left:878px;top:558px;width:1px;height:31px;background:#d6d6d6"></div>
<div style="left:1019px;top:558px;width:1px;height:31px;background:#d6d6d6"></div>
<div style="left:1160px;top:558px;width:1px;height:31px;background:#d6d6d6"></div>
<div style="left:1301px;top:558px;width:1px;height:31px;background:#d6d6d6"></div>
<div style="left:1442px;top:558px;width:1px;height:31px;background:#d6d6d6"></div>
<div style="left:311px;top:588px;width:1272px;height:1px;background:#d6d6d6"></div>
<div style="left:376px;top:566px;width:13px;height:13px;background:#005fb8;border-radius:3px"></div>
<svg style="left:376px;top:566px" width="13" height="13"><path d="M3.2 6.8 L5.4 9 L9.8 4.3" stroke="#fff" fill="none" stroke-width="1.1"/></svg>
<div class="t" style="left:457px;top:567px;font-size:11px;color:#111;font-weight:normal;letter-spacing:-0.15px;letter-spacing:-0.28px">Signal - Map</div>
<div class="t" style="left:598px;top:561px;font-size:11px;color:#111;font-weight:normal;letter-spacing:-0.15px;letter-spacing:-0.34px">DW CAN 01 - Vivid CAN :</div>
<div class="t" style="left:598px;top:574px;font-size:11px;color:#111;font-weight:normal;letter-spacing:-0.15px;">CAN</div>
<div class="t" style="left:739px;top:567px;font-size:11px;color:#111;font-weight:normal;letter-spacing:-0.15px;">StdCAN_11bit (in179)</div>
<div class="t" style="left:880px;top:567px;font-size:11px;color:#111;font-weight:normal;letter-spacing:-0.15px;">Byte_6 (in179-sig5)</div>
<div class="t" style="left:1021px;top:567px;font-size:11px;color:#111;font-weight:normal;letter-spacing:-0.15px;letter-spacing:0px">Ethernet - GW : Ethernet</div>
<div class="t" style="left:1162px;top:567px;font-size:11px;color:#111;font-weight:normal;letter-spacing:-0.15px;letter-spacing:-0.22px">TX_CAN1_Std (out8)</div>
<div class="t" style="left:1303px;top:567px;font-size:11px;color:#111;font-weight:normal;letter-spacing:-0.15px;letter-spacing:-0.05px">Byte_6 (out8-sig29)</div>
<div class="t" style="left:1444px;top:567px;font-size:11px;color:#111;font-weight:normal;letter-spacing:-0.15px;letter-spacing:-0.22px">Receive</div>
<div style="left:455px;top:589px;width:1px;height:31px;background:#d6d6d6"></div>
<div style="left:596px;top:589px;width:1px;height:31px;background:#d6d6d6"></div>
<div style="left:737px;top:589px;width:1px;height:31px;background:#d6d6d6"></div>
<div style="left:878px;top:589px;width:1px;height:31px;background:#d6d6d6"></div>
<div style="left:1019px;top:589px;width:1px;height:31px;background:#d6d6d6"></div>
<div style="left:1160px;top:589px;width:1px;height:31px;background:#d6d6d6"></div>
<div style="left:1301px;top:589px;width:1px;height:31px;background:#d6d6d6"></div>
<div style="left:1442px;top:589px;width:1px;height:31px;background:#d6d6d6"></div>
<div style="left:311px;top:619px;width:1272px;height:1px;background:#d6d6d6"></div>
<div style="left:376px;top:597px;width:13px;height:13px;background:#005fb8;border-radius:3px"></div>
<svg style="left:376px;top:597px" width="13" height="13"><path d="M3.2 6.8 L5.4 9 L9.8 4.3" stroke="#fff" fill="none" stroke-width="1.1"/></svg>
<div class="t" style="left:457px;top:598px;font-size:11px;color:#111;font-weight:normal;letter-spacing:-0.15px;letter-spacing:-0.28px">Signal - Map</div>
<div class="t" style="left:598px;top:592px;font-size:11px;color:#111;font-weight:normal;letter-spacing:-0.15px;letter-spacing:-0.34px">DW CAN 01 - Vivid CAN :</div>
<div class="t" style="left:598px;top:605px;font-size:11px;color:#111;font-weight:normal;letter-spacing:-0.15px;">CAN</div>
<div class="t" style="left:739px;top:598px;font-size:11px;color:#111;font-weight:normal;letter-spacing:-0.15px;">StdCAN_11bit (in179)</div>
<div class="t" style="left:880px;top:598px;font-size:11px;color:#111;font-weight:normal;letter-spacing:-0.15px;">Byte_7 (in179-sig6)</div>
<div class="t" style="left:1021px;top:598px;font-size:11px;color:#111;font-weight:normal;letter-spacing:-0.15px;letter-spacing:0px">Ethernet - GW : Ethernet</div>
<div class="t" style="left:1162px;top:598px;font-size:11px;color:#111;font-weight:normal;letter-spacing:-0.15px;letter-spacing:-0.22px">TX_CAN1_Std (out8)</div>
<div class="t" style="left:1303px;top:598px;font-size:11px;color:#111;font-weight:normal;letter-spacing:-0.15px;letter-spacing:-0.05px">Byte_7 (out8-sig30)</div>
<div class="t" style="left:1444px;top:598px;font-size:11px;color:#111;font-weight:normal;letter-spacing:-0.15px;letter-spacing:-0.22px">Receive</div>
<div style="left:455px;top:620px;width:1px;height:31px;background:#d6d6d6"></div>
<div style="left:596px;top:620px;width:1px;height:31px;background:#d6d6d6"></div>
<div style="left:737px;top:620px;width:1px;height:31px;background:#d6d6d6"></div>
<div style="left:878px;top:620px;width:1px;height:31px;background:#d6d6d6"></div>
<div style="left:1019px;top:620px;width:1px;height:31px;background:#d6d6d6"></div>
<div style="left:1160px;top:620px;width:1px;height:31px;background:#d6d6d6"></div>
<div style="left:1301px;top:620px;width:1px;height:31px;background:#d6d6d6"></div>
<div style="left:1442px;top:620px;width:1px;height:31px;background:#d6d6d6"></div>
<div style="left:311px;top:650px;width:1272px;height:1px;background:#d6d6d6"></div>
<div style="left:376px;top:628px;width:13px;height:13px;background:#005fb8;border-radius:3px"></div>
<svg style="left:376px;top:628px" width="13" height="13"><path d="M3.2 6.8 L5.4 9 L9.8 4.3" stroke="#fff" fill="none" stroke-width="1.1"/></svg>
<div class="t" style="left:457px;top:629px;font-size:11px;color:#111;font-weight:normal;letter-spacing:-0.15px;letter-spacing:-0.28px">Signal - Map</div>
<div class="t" style="left:598px;top:623px;font-size:11px;color:#111;font-weight:normal;letter-spacing:-0.15px;letter-spacing:-0.34px">DW CAN 01 - Vivid CAN :</div>
<div class="t" style="left:598px;top:636px;font-size:11px;color:#111;font-weight:normal;letter-spacing:-0.15px;">CAN</div>
<div class="t" style="left:739px;top:629px;font-size:11px;color:#111;font-weight:normal;letter-spacing:-0.15px;">StdCAN_11bit (in179)</div>
<div class="t" style="left:880px;top:629px;font-size:11px;color:#111;font-weight:normal;letter-spacing:-0.15px;">Byte_8 (in179-sig7)</div>
<div class="t" style="left:1021px;top:629px;font-size:11px;color:#111;font-weight:normal;letter-spacing:-0.15px;letter-spacing:0px">Ethernet - GW : Ethernet</div>
<div class="t" style="left:1162px;top:629px;font-size:11px;color:#111;font-weight:normal;letter-spacing:-0.15px;letter-spacing:-0.22px">TX_CAN1_Std (out8)</div>
<div class="t" style="left:1303px;top:629px;font-size:11px;color:#111;font-weight:normal;letter-spacing:-0.15px;letter-spacing:-0.05px">Byte_8 (out8-sig31)</div>
<div class="t" style="left:1444px;top:629px;font-size:11px;color:#111;font-weight:normal;letter-spacing:-0.15px;letter-spacing:-0.22px">Receive</div>
<div style="left:313px;top:741px;width:84px;height:29px;border:1px solid #d0d0d0;border-radius:3px;background:#fdfdfd"></div>
<div class="t" style="left:313px;top:745px;width:84px;text-align:center;font-size:11px;color:#111;font-weight:normal;letter-spacing:-0.15px;">Reset Column</div>
<div class="t" style="left:313px;top:758px;width:84px;text-align:center;font-size:11px;color:#111;font-weight:normal;letter-spacing:-0.15px;">Sizes</div>
<div style="left:401px;top:741px;width:18px;height:29px;border:1px solid #d0d0d0;border-radius:3px;background:#fdfdfd"></div>
<div style="left:421px;top:741px;width:18px;height:29px;border:1px solid #d0d0d0;border-radius:3px;background:#fdfdfd"></div>
<svg style="left:402px;top:748px" width="16" height="16"><path d="M8 1 L14 8 H10.5 V15 H5.5 V8 H2 Z" fill="#111"/></svg>
<svg style="left:422px;top:748px" width="16" height="16"><path d="M8 15 L14 8 H10.5 V1 H5.5 V8 H2 Z" fill="#111"/></svg>
<div style="left:1348px;top:740px;width:234px;height:31px;border-top:1px solid #a0a0a0;border-left:1px solid #a0a0a0;background:#f0f0f0"></div>
<div style="left:310px;top:776px;width:1276px;height:2px;background:#9a9a9a"></div>
<div style="left:1584px;top:178px;width:2px;height:600px;background:#9a9a9a"></div>
<div style="left:1591px;top:178px;width:1px;height:600px;background:#a8a8a8"></div>
<div style="left:1595px;top:178px;width:298px;height:599px;background:#fff"></div>
<div style="left:1595px;top:178px;width:298px;height:104px;background:#f0f0f0"></div>
<div class="t" style="left:1604px;top:181px;font-size:11px;color:#111;font-weight:normal;letter-spacing:-0.15px;">Output Network</div>
<div style="left:1597px;top:197px;width:294px;height:20px;background:#fff;border-bottom:1px solid #707070"></div>
<div class="t" style="left:1599px;top:201px;font-size:11px;color:#111;font-weight:normal;letter-spacing:-0.15px;">Ethernet - GW : Ethernet</div>
<svg style="left:1876px;top:204px" width="12" height="8"><path d="M1 1.5 L6 6 L11 1.5" stroke="#555" fill="none"/></svg>
<div style="left:1603px;top:225px;width:51px;height:46px;border:1px solid #e6e6e6;border-radius:3px;background:#f7f7f7"></div>
<div class="t" style="left:1603px;top:229px;width:51px;text-align:center;font-size:11px;color:#8a8a8a;font-weight:normal;letter-spacing:-0.15px;">Set As</div>
<div class="t" style="left:1603px;top:242px;width:51px;text-align:center;font-size:11px;color:#8a8a8a;font-weight:normal;letter-spacing:-0.15px;">Output</div>
<div class="t" style="left:1603px;top:255px;width:51px;text-align:center;font-size:11px;color:#8a8a8a;font-weight:normal;letter-spacing:-0.15px;">Network</div>
<div class="t" style="left:1670px;top:222px;font-size:11px;color:#111;font-weight:normal;letter-spacing:-0.15px;">Sort By:</div>
<div style="left:1714px;top:222px;width:135px;height:20px;background:#fbfbfb;border:1px solid #dcdcdc;border-bottom-color:#a8a8a8;border-radius:3px"></div>
<div class="t" style="left:1718px;top:226px;font-size:11px;color:#111;font-weight:normal;letter-spacing:-0.15px;">Messages</div>
<svg style="left:1831px;top:229px" width="12" height="8"><path d="M1 1.5 L6 6 L11 1.5" stroke="#555" fill="none"/></svg>
<div class="t" style="left:1670px;top:256px;font-size:11px;color:#111;font-weight:normal;letter-spacing:-0.15px;">Find</div>
<div style="left:1700px;top:254px;width:135px;height:20px;background:#fff;border-bottom:1px solid #707070"></div>
<div style="left:1839px;top:255px;width:51px;height:19px;border:1px solid #d0d0d0;border-radius:3px;background:#fdfdfd"></div>
<div class="t" style="left:1839px;top:258px;width:51px;text-align:center;font-size:11px;color:#111;font-weight:normal;letter-spacing:-0.15px;">Clear</div>
<div style="left:1599px;top:286px;width:9px;height:9px;border:1px solid #8aa0c0;background:#fff"></div>
<svg style="left:1599px;top:286px" width="9" height="9"><path d="M2 4.5 H7 M4.5 2 V7" stroke="#234"/></svg>
<svg style="left:1614px;top:283px" width="14" height="15"><rect x="2" y="1" width="9" height="8" fill="#7c7" stroke="#111" stroke-width="1.2"/><path d="M1 12 H13 V14 H1 Z M4 9 V12 M9 9 V12" stroke="#111" fill="none"/></svg>
<div class="t" style="left:1632px;top:285px;font-size:11px;color:#111;font-weight:normal;letter-spacing:-0.15px;">Tx Messages</div>
<div style="left:1595px;top:737px;width:298px;height:40px;background:#f0f0f0"></div>
<div style="left:1602px;top:746px;width:78px;height:21px;border:1px solid #e6e6e6;border-radius:3px;background:#f7f7f7"></div>
<div class="t" style="left:1602px;top:750px;width:78px;text-align:center;font-size:11px;color:#8a8a8a;font-weight:normal;letter-spacing:-0.15px;">Set As Output</div>
<div style="left:1802px;top:746px;width:83px;height:21px;border:1px solid #d0d0d0;border-radius:3px;background:#fdfdfd"></div>
<div class="t" style="left:1802px;top:750px;width:83px;text-align:center;font-size:11px;color:#111;font-weight:normal;letter-spacing:-0.15px;">Swap Netwoks</div>
<div style="left:1893px;top:178px;width:2px;height:600px;background:#9a9a9a"></div>
<div style="left:1595px;top:776px;width:300px;height:2px;background:#9a9a9a"></div>
<div style="left:0px;top:778px;width:1895px;height:254px;background:#f0f0f0"></div>
<div style="left:0px;top:778px;width:1895px;height:7px;background:#fafafa"></div>
<div style="left:2px;top:785px;width:1892px;height:19px;background:#0078d4"></div>
<div class="t" style="left:2px;top:787px;width:1892px;text-align:center;font-size:13px;color:#fff;font-weight:bold;letter-spacing:0.42px">Setup Panel for Currently Selected Gateway Item</div>
<div style="left:0px;top:804px;width:1895px;height:3px;background:#fafafa"></div>
<div style="left:2px;top:806px;width:1891px;height:226px;background:#f0f0f0;border-top:2px solid #8a8a8a;border-left:2px solid #8a8a8a;border-right:2px solid #a8a8a8"></div>
<div class="t" style="left:750px;top:820px;font-size:13px;color:#111;font-weight:bold;">Input</div>
<div class="t" style="left:880px;top:824px;font-size:11px;color:#111;font-weight:normal;letter-spacing:-0.15px;">Type:</div>
<div style="left:914px;top:818px;width:151px;height:20px;border:1px solid #7a7a7a;border-right-color:#9a9a9a;border-bottom-color:#5a5a5a;background:#f0f0f0"></div>
<div class="t" style="left:914px;top:823px;width:151px;text-align:center;font-size:11px;color:#1a1ae0;font-weight:normal;letter-spacing:-0.15px;">Signal - Map</div>
<div class="t" style="left:1213px;top:820px;font-size:13px;color:#111;font-weight:bold;">Output</div>
<div class="t" style="left:1424px;top:824px;font-size:11px;color:#f5a01a;font-weight:bold;letter-spacing:0.4px">Warning</div>
<div style="left:1474px;top:822px;width:15px;height:15px;border-radius:50%;background:#f5a000;border:1px solid #222"></div>
<div class="t" style="left:542px;top:856px;font-size:11px;color:#111;font-weight:normal;letter-spacing:-0.15px;">Network:</div>
<div style="left:591px;top:852px;width:347px;height:20px;border:1px solid #7a7a7a;border-right-color:#9a9a9a;border-bottom-color:#5a5a5a;background:#f0f0f0"></div>
<div class="t" style="left:591px;top:857px;width:347px;text-align:center;font-size:11px;color:#111;font-weight:normal;letter-spacing:-0.15px;">DW CAN 01 - Vivid CAN : CAN</div>
<div class="t" style="left:976px;top:856px;font-size:11px;color:#111;font-weight:normal;letter-spacing:-0.15px;">Network:</div>
<div style="left:1026px;top:852px;width:447px;height:20px;border:1px solid #7a7a7a;border-right-color:#9a9a9a;border-bottom-color:#5a5a5a;background:#f0f0f0"></div>
<div class="t" style="left:1026px;top:857px;width:447px;text-align:center;font-size:11px;color:#111;font-weight:normal;letter-spacing:-0.15px;">Ethernet - GW : Ethernet</div>
<div style="left:537px;top:881px;width:416px;height:31px;background:#fff;border-top:1px solid #b8b8b8;border-left:1px solid #b8b8b8"></div>
<div class="t" style="left:537px;top:887px;width:400px;text-align:center;font-size:11px;color:#f5a01a;font-weight:normal;letter-spacing:-0.15px;">can.arbid</div>
<svg style="left:940px;top:889px" width="10" height="6"><path d="M0.5 0.5 H9.5 L5 5.5 Z" fill="#111"/></svg>
<div style="left:971px;top:881px;width:517px;height:31px;background:#fff;border-top:1px solid #b8b8b8;border-left:1px solid #b8b8b8"></div>
<div class="t" style="left:971px;top:887px;width:487px;text-align:center;font-size:11px;color:#f5a01a;font-weight:normal;letter-spacing:-0.15px;">ArbID (out8-sig22)</div>
<svg style="left:1461px;top:889px" width="10" height="6"><path d="M0.5 0.5 H9.5 L5 5.5 Z" fill="#111"/></svg>
<div class="t" style="left:1476px;top:887px;font-size:12px;color:#111;font-weight:bold;">x</div>
<div style="left:537px;top:926px;width:13px;height:13px;border:1px solid #cfcfcf;border-radius:3px;background:#fdfdfd"></div>
<div class="t" style="left:552px;top:927px;font-size:11px;color:#8a8a8a;font-weight:normal;letter-spacing:-0.15px;">Ignore Tx Messages</div>
<div style="left:884px;top:924px;width:70px;height:71px;border:1px solid #dcdcdc"></div>
<div style="left:889px;top:919px;width:36px;height:10px;background:#f0f0f0"></div>
<div class="t" style="left:891px;top:918px;font-size:11px;color:#111;font-weight:normal;letter-spacing:-0.15px;">Action</div>
<div style="left:888px;top:933px;width:13px;height:13px;border-radius:50%;border:1px solid #cfcfcf;background:#fdfdfd"></div>
<div class="t" style="left:903px;top:933px;font-size:11px;color:#8a8a8a;font-weight:normal;letter-spacing:-0.15px;">Forward</div>
<div style="left:888px;top:956px;width:13px;height:13px;border-radius:50%;background:#005fb8"></div><div style="left:892px;top:960px;width:5px;height:5px;border-radius:50%;background:#fff"></div>
<div class="t" style="left:903px;top:956px;font-size:11px;color:#111;font-weight:normal;letter-spacing:-0.15px;">Map</div>
<div style="left:888px;top:979px;width:13px;height:13px;border-radius:50%;border:1px solid #5a5a5a;background:#fdfdfd"></div>
<div class="t" style="left:903px;top:979px;font-size:11px;color:#111;font-weight:normal;letter-spacing:-0.15px;">Trigger</div>
<div style="left:536px;top:954px;width:13px;height:13px;border:1px solid #5a5a5a;border-radius:3px;background:#fdfdfd"></div>
<div class="t" style="left:551px;top:955px;font-size:11px;color:#111;font-weight:normal;letter-spacing:-0.15px;">Expression:</div>
<div class="t" style="left:642px;top:952px;font-size:11px;color:#8a8a8a;font-weight:normal;letter-spacing:-0.15px;">Protection:</div>
<div style="left:697px;top:943px;width:180px;height:20px;background:#fbfbfb;border:1px solid #dcdcdc;border-bottom-color:#a8a8a8;border-radius:3px"></div>
<div class="t" style="left:701px;top:947px;font-size:11px;color:#111;font-weight:normal;letter-spacing:-0.15px;">None</div>
<svg style="left:859px;top:950px" width="12" height="8"><path d="M1 1.5 L6 6 L11 1.5" stroke="#555" fill="none"/></svg>
<div style="left:536px;top:975px;width:308px;height:21px;background:#fff"></div>
<div style="left:851px;top:975px;width:25px;height:22px;border:1px solid #e4e4e4;border-radius:3px;background:#f8f8f8"></div>
<div class="t" style="left:857px;top:979px;font-size:13px;color:#111;font-weight:normal;font-family:"Liberation Serif",serif"><i><b>f</b></i><i style="font-size:9px">x</i></div>
<div style="left:536px;top:1005px;width:13px;height:13px;border:1px solid #5a5a5a;border-radius:3px;background:#fdfdfd"></div>
<div class="t" style="left:551px;top:1006px;font-size:11px;color:#111;font-weight:normal;letter-spacing:-0.15px;">Min:</div>
<div style="left:575px;top:1002px;width:127px;height:21px;background:#fff"></div>
<div style="left:711px;top:1002px;width:25px;height:22px;border:1px solid #e4e4e4;border-radius:3px;background:#f8f8f8"></div>
<div class="t" style="left:717px;top:1006px;font-size:13px;color:#111;font-weight:normal;font-family:"Liberation Serif",serif"><i><b>f</b></i><i style="font-size:9px">x</i></div>
<div style="left:749px;top:1005px;width:13px;height:13px;border:1px solid #5a5a5a;border-radius:3px;background:#fdfdfd"></div>
<div class="t" style="left:764px;top:1006px;font-size:11px;color:#111;font-weight:normal;letter-spacing:-0.15px;">Max:</div>
<div style="left:792px;top:1002px;width:127px;height:21px;background:#fff"></div>
<div style="left:928px;top:1002px;width:25px;height:22px;border:1px solid #e4e4e4;border-radius:3px;background:#f8f8f8"></div>
<div class="t" style="left:934px;top:1006px;font-size:13px;color:#111;font-weight:normal;font-family:"Liberation Serif",serif"><i><b>f</b></i><i style="font-size:9px">x</i></div>
<div style="left:971px;top:927px;width:13px;height:13px;border:1px solid #5a5a5a;border-radius:3px;background:#fdfdfd"></div>
<div class="t" style="left:986px;top:928px;font-size:11px;color:#111;font-weight:normal;letter-spacing:-0.15px;">Pad short frames</div>
<div style="left:1075px;top:927px;width:13px;height:13px;border:1px solid #5a5a5a;border-radius:3px;background:#fdfdfd"></div>
<div class="t" style="left:1090px;top:928px;font-size:11px;color:#111;font-weight:normal;letter-spacing:-0.15px;">Enable Automatic Checksum Updating</div>
<div class="t" style="left:1281px;top:929px;font-size:11px;color:#9a9a9a;font-weight:normal;letter-spacing:-0.15px;">Type:</div>
<div style="left:1312px;top:920px;width:178px;height:20px;background:#f6f6f6;border:1px solid #e8e8e8;border-radius:3px"></div>
<svg style="left:1474px;top:927px" width="12" height="8"><path d="M1 1.5 L6 6 L11 1.5" stroke="#aaa" fill="none"/></svg>
<div style="left:971px;top:953px;width:519px;height:73px;border:1px solid #dcdcdc"></div>
<div style="left:976px;top:947px;width:75px;height:12px;background:#f0f0f0"></div>
<div class="t" style="left:978px;top:948px;font-size:11px;color:#111;font-weight:normal;letter-spacing:-0.15px;">Output Triggers</div>
<div style="left:974px;top:965px;width:61px;height:21px;background:#fbfbfb;border:1px solid #dcdcdc;border-bottom-color:#a8a8a8;border-radius:3px"></div>
<div class="t" style="left:978px;top:969px;font-size:11px;color:#111;font-weight:normal;letter-spacing:-0.15px;">Receive</div>
<svg style="left:1021px;top:972px" width="12" height="8"><path d="M1 1.5 L6 6 L11 1.5" stroke="#555" fill="none"/></svg>
<div style="left:1040px;top:961px;width:1px;height:32px;background:#9a9a9a"></div>
<div style="left:1047px;top:966px;width:13px;height:13px;border:1px solid #5a5a5a;border-radius:3px;background:#fdfdfd"></div>
<div class="t" style="left:1062px;top:962px;font-size:11px;color:#111;font-weight:normal;letter-spacing:-0.15px;">Use</div>
<div class="t" style="left:1062px;top:975px;font-size:11px;color:#111;font-weight:normal;letter-spacing:-0.15px;">Rate</div>
<div style="left:1089px;top:950px;width:80px;height:8px;background:#f0f0f0"></div>
<div style="left:1297px;top:950px;width:72px;height:8px;background:#f0f0f0"></div>
<div style="left:1091px;top:967px;width:13px;height:13px;border:1px solid #cfcfcf;border-radius:3px;background:#fdfdfd"></div>
<div class="t" style="left:1106px;top:956px;font-size:11px;color:#9a9a9a;font-weight:normal;letter-spacing:-0.15px;">Transmit</div>
<div class="t" style="left:1106px;top:969px;font-size:11px;color:#9a9a9a;font-weight:normal;letter-spacing:-0.15px;">only after</div>
<div class="t" style="left:1106px;top:982px;font-size:11px;color:#9a9a9a;font-weight:normal;letter-spacing:-0.15px;">first trigger</div>
<div style="left:1170px;top:964px;width:40px;height:20px;background:#fff"></div>
<div class="t" style="left:1189px;top:967px;font-size:11px;color:#444;font-weight:normal;letter-spacing:-0.15px;">100</div>
<div class="t" style="left:1211px;top:974px;font-size:11px;color:#9a9a9a;font-weight:normal;letter-spacing:-0.15px;">ms</div>
<div style="left:1231px;top:968px;width:13px;height:13px;background:#c8c8c8;border-radius:3px"></div>
<svg style="left:1231px;top:968px" width="13" height="13"><path d="M3.2 6.8 L5.4 9 L9.8 4.3" stroke="#fff" fill="none" stroke-width="1.1"/></svg>
<div class="t" style="left:1246px;top:958px;font-size:11px;color:#9a9a9a;font-weight:normal;letter-spacing:-0.15px;">Use</div>
<div class="t" style="left:1246px;top:971px;font-size:11px;color:#9a9a9a;font-weight:normal;letter-spacing:-0.15px;">Message</div>
<div class="t" style="left:1246px;top:984px;font-size:11px;color:#9a9a9a;font-weight:normal;letter-spacing:-0.15px;">Rate</div>
<div style="left:1293px;top:961px;width:1px;height:32px;background:#9a9a9a"></div>
<div style="left:1299px;top:967px;width:13px;height:13px;border:1px solid #5a5a5a;border-radius:3px;background:#fdfdfd"></div>
<div class="t" style="left:1314px;top:955px;font-size:11px;color:#111;font-weight:normal;letter-spacing:-0.15px;">Transmit</div>
<div class="t" style="left:1314px;top:968px;font-size:11px;color:#111;font-weight:normal;letter-spacing:-0.15px;">only when</div>
<div class="t" style="left:1314px;top:981px;font-size:11px;color:#111;font-weight:normal;letter-spacing:-0.15px;">full</div>
<div style="left:1373px;top:966px;width:13px;height:13px;border:1px solid #cfcfcf;border-radius:3px;background:#fdfdfd"></div>
<div class="t" style="left:1389px;top:967px;font-size:11px;color:#9a9a9a;font-weight:normal;letter-spacing:-0.15px;">Timeout:</div>
<div style="left:1434px;top:964px;width:38px;height:20px;background:#fff"></div>
<div class="t" style="left:1452px;top:967px;font-size:11px;color:#444;font-weight:normal;letter-spacing:-0.15px;">100</div>
<div class="t" style="left:1473px;top:972px;font-size:11px;color:#9a9a9a;font-weight:normal;letter-spacing:-0.15px;">ms</div>
<div style="left:979px;top:1004px;width:13px;height:13px;border:1px solid #5a5a5a;border-radius:3px;background:#fdfdfd"></div>
<div class="t" style="left:995px;top:1005px;font-size:11px;color:#111;font-weight:normal;letter-spacing:-0.15px;letter-spacing:-0.2px">Condition:</div>
<div style="left:1047px;top:1001px;width:406px;height:21px;background:#fff"></div>
<div style="left:1457px;top:1001px;width:25px;height:22px;border:1px solid #e4e4e4;border-radius:3px;background:#f8f8f8"></div>
<div class="t" style="left:1463px;top:1005px;font-size:13px;color:#111;font-weight:normal;font-family:"Liberation Serif",serif"><i><b>f</b></i><i style="font-size:9px">x</i></div>
<div style="left:1894px;top:116px;width:26px;height:916px;background:#fff"></div>
<div style="left:1894px;top:139px;width:1px;height:893px;background:#c8c8c8"></div>
<div style="left:1919px;top:139px;width:1px;height:550px;background:#c8c8c8"></div>
<div style="left:1895px;top:139px;width:25px;height:1px;background:#b8b8b8"></div>
<div style="left:1895px;top:189px;width:25px;height:1px;background:#b8b8b8"></div>
<div style="left:1895px;top:239px;width:25px;height:1px;background:#b8b8b8"></div>
<div style="left:1895px;top:289px;width:25px;height:1px;background:#b8b8b8"></div>
<div style="left:1895px;top:339px;width:25px;height:1px;background:#b8b8b8"></div>
<div style="left:1895px;top:389px;width:25px;height:1px;background:#b8b8b8"></div>
<div style="left:1895px;top:439px;width:25px;height:1px;background:#b8b8b8"></div>
<div style="left:1895px;top:489px;width:25px;height:1px;background:#b8b8b8"></div>
<div style="left:1895px;top:539px;width:25px;height:1px;background:#b8b8b8"></div>
<div style="left:1895px;top:589px;width:25px;height:1px;background:#b8b8b8"></div>
<div style="left:1895px;top:639px;width:25px;height:1px;background:#b8b8b8"></div>
<div style="left:1895px;top:689px;width:25px;height:1px;background:#b8b8b8"></div>
<div style="left:1906px;top:162px;width:3px;height:3px;transform:rotate(45deg);background:#111"></div>
<div style="left:1906px;top:212px;width:3px;height:3px;transform:rotate(45deg);background:#111"></div>
<div style="left:1906px;top:262px;width:3px;height:3px;transform:rotate(45deg);background:#111"></div>
<div style="left:1906px;top:312px;width:3px;height:3px;transform:rotate(45deg);background:#111"></div>
<div style="left:1906px;top:362px;width:3px;height:3px;transform:rotate(45deg);background:#111"></div>
<div style="left:1906px;top:412px;width:3px;height:3px;transform:rotate(45deg);background:#111"></div>
<div style="left:1906px;top:462px;width:3px;height:3px;transform:rotate(45deg);background:#111"></div>
<div style="left:1906px;top:512px;width:3px;height:3px;transform:rotate(45deg);background:#111"></div>
<div style="left:1906px;top:562px;width:3px;height:3px;transform:rotate(45deg);background:#111"></div>
<div style="left:1906px;top:612px;width:3px;height:3px;transform:rotate(45deg);background:#111"></div>
<div style="left:1906px;top:662px;width:3px;height:3px;transform:rotate(45deg);background:#111"></div>
<svg style="left:1899px;top:121px" width="19" height="13"><rect x="1" y="3" width="17" height="9" rx="2" fill="#555"/><rect x="6" y="0" width="4" height="3" fill="#cc9"/><circle cx="9.5" cy="7.5" r="3.3" fill="#6bb0e8" stroke="#ddd"/></svg></body></html>
